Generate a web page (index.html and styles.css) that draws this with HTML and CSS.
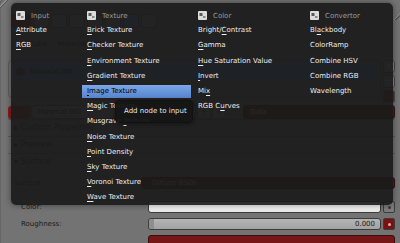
FILE: index.html
```html
<!DOCTYPE html>
<html lang="en">

<head>
    <meta charset="UTF-8">
    <title>Add Node Menu</title>
    <link rel="stylesheet" href="styles.css">
</head>

<body>
    <div class="screen">
        <!-- properties editor underneath the popup -->
        <div class="props">
            <div class="row toolbar">
                <div class="tb-btn red"></div>
                <div class="tb-btn"></div>
                <div class="tb-btn"></div>
                <div class="tb-btn"></div>
                <div class="tb-btn"></div>
                <div class="tb-btn"></div>
                <div class="tb-btn blue"></div>
                <div class="tb-btn"></div>
            </div>
            <div class="row crumbs">
                <span class="crumb-icon"></span><span>Cube</span><span class="crumb-sep">›</span><span>Material.001</span>
            </div>
            <div class="row list-row">
                <div class="list-box">
                    <div class="list-item active"><span class="ball"></span>Material.001</div>
                </div>
                <div class="list-side">
                    <div class="side-btn">+</div>
                    <div class="side-btn">−</div>
                    <div class="side-btn red"></div>
                </div>
            </div>
            <div class="row datablock">
                <div class="db-ball"></div>
                <div class="db-name">Material.001</div>
                <div class="db-btn">F</div>
                <div class="db-btn">+</div>
                <div class="db-btn">×</div>
                <div class="db-data">Data</div>
            </div>
            <div class="panel-head">▸ Custom Properties</div>
            <div class="panel-head">▸ Preview</div>
            <div class="panel-head">▾ Surface</div>
            <div class="row prop surface">
                <div class="prop-label">Surface:</div>
                <div class="field red-field">Diffuse BSDF</div>
            </div>
            <div class="row prop">
                <div class="prop-label">Color:</div>
                <div class="field color-field"></div>
                <div class="mini-btn"></div>
            </div>
            <div class="row prop">
                <div class="prop-label">Roughness:</div>
                <div class="field slider-field"><span class="slider-cap"></span><span>0.000</span></div>
                <div class="mini-btn red"></div>
            </div>
            <div class="row prop">
                <div class="prop-label"></div>
                <div class="field red-field full"></div>
            </div>
        </div>

        <div class="hatch hatch-tl"></div>
        <div class="hatch hatch-tr"></div>

        <!-- add node popup -->
        <div class="menu">
            <div class="menu-col">
                <div class="menu-head"><svg class="node-icon" width="9" height="9" viewBox="0 0 9 9"><rect width="9" height="9" rx="1" fill="#dcdcdc"/><rect x="1.5" y="2" width="3" height="3" fill="#5a5a5a"/><rect x="5" y="5" width="2.5" height="2" fill="#8a8a8a"/></svg>Input</div>
                <div class="menu-item"><u>A</u>ttribute</div>
                <div class="menu-item"><u>R</u>GB</div>
            </div>
            <div class="menu-col">
                <div class="menu-head"><svg class="node-icon" width="9" height="9" viewBox="0 0 9 9"><rect width="9" height="9" rx="1" fill="#dcdcdc"/><rect x="1.5" y="2" width="3" height="3" fill="#5a5a5a"/><rect x="5" y="5" width="2.5" height="2" fill="#8a8a8a"/></svg>Texture</div>
                <div class="menu-item"><u>B</u>rick Texture</div>
                <div class="menu-item"><u>C</u>hecker Texture</div>
                <div class="menu-item"><u>E</u>nvironment Texture</div>
                <div class="menu-item"><u>G</u>radient Texture</div>
                <div class="menu-item active"><u>I</u>mage Texture</div>
                <div class="menu-item"><u>M</u>agic Texture</div>
                <div class="menu-item">Musgrave <u>T</u>exture</div>
                <div class="menu-item"><u>N</u>oise Texture</div>
                <div class="menu-item"><u>P</u>oint Density</div>
                <div class="menu-item"><u>S</u>ky Texture</div>
                <div class="menu-item"><u>V</u>oronoi Texture</div>
                <div class="menu-item"><u>W</u>ave Texture</div>
            </div>
            <div class="menu-col">
                <div class="menu-head"><svg class="node-icon" width="9" height="9" viewBox="0 0 9 9"><rect width="9" height="9" rx="1" fill="#dcdcdc"/><rect x="1.5" y="2" width="3" height="3" fill="#5a5a5a"/><rect x="5" y="5" width="2.5" height="2" fill="#8a8a8a"/></svg>Color</div>
                <div class="menu-item">Bright/<u>C</u>ontrast</div>
                <div class="menu-item"><u>G</u>amma</div>
                <div class="menu-item"><u>H</u>ue Saturation Value</div>
                <div class="menu-item"><u>I</u>nvert</div>
                <div class="menu-item">Mi<u>x</u></div>
                <div class="menu-item">RGB C<u>u</u>rves</div>
            </div>
            <div class="menu-col">
                <div class="menu-head"><svg class="node-icon" width="9" height="9" viewBox="0 0 9 9"><rect width="9" height="9" rx="1" fill="#dcdcdc"/><rect x="1.5" y="2" width="3" height="3" fill="#5a5a5a"/><rect x="5" y="5" width="2.5" height="2" fill="#8a8a8a"/></svg>Convertor</div>
                <div class="menu-item">Bl<u>a</u>ckbody</div>
                <div class="menu-item">ColorRamp</div>
                <div class="menu-item">Combine HSV</div>
                <div class="menu-item">Combine RGB</div>
                <div class="menu-item">Wavelength</div>
            </div>
        </div>

        <div class="tooltip">Add node to input</div>
    </div>
</body>

</html>
```

FILE: styles.css
```css
body {
    margin: 0;
    background-color: #737373;
}

.screen {
    position: relative;
    width: 400px;
    height: 243px;
    overflow: hidden;
    background-color: #737373;
    font-family: "DejaVu Sans", sans-serif;
    font-size: 7px;
    color: #111;
}

/* properties editor */
.props {
    display: flex;
    flex-direction: column;
    padding: 14px 5px 0 7px;
    border-left: 1px solid #666;
}

.row {
    display: flex;
    align-items: center;
}

.toolbar {
    height: 14px;
    gap: 2px;
    padding-left: 3px;
}

.tb-btn {
    width: 14px;
    height: 12px;
    background-color: #8a8a8a;
    border: 1px solid #4a4a4a;
    border-radius: 3px;
}

.tb-btn.red {
    width: 18px;
    background-color: #8a1c1c;
}

.tb-btn.blue {
    background-color: #5680c2;
}

.crumbs {
    height: 15px;
    margin-top: 8px;
    gap: 4px;
    padding-left: 8px;
}

.crumb-icon {
    width: 9px;
    height: 9px;
    border-radius: 2px;
    background-color: #b0702a;
}

.crumb-sep {
    color: #333;
}

.list-row {
    height: 40px;
    margin-top: 9px;
    align-items: flex-start;
}

.list-box {
    flex: 1;
    height: 38px;
    border: 1px solid #5c5c5c;
    border-radius: 4px;
    padding: 2px 4px;
    box-sizing: border-box;
}

.list-item {
    display: flex;
    align-items: center;
    gap: 5px;
    height: 17px;
    padding-left: 3px;
    border-radius: 2px;
}

.list-item.active {
    background-color: #52729f;
}

.ball {
    width: 9px;
    height: 9px;
    border-radius: 50%;
    background-color: #444;
}

.list-side {
    display: flex;
    flex-direction: column;
    gap: 2px;
    width: 12px;
    margin-left: 2px;
}

.side-btn {
    height: 11px;
    background-color: #8a8a8a;
    border: 1px solid #4a4a4a;
    border-radius: 3px;
    text-align: center;
    line-height: 11px;
    color: #ddd;
}

.side-btn.red {
    background-color: #8a1c1c;
}

.datablock {
    height: 14px;
    margin-top: 5px;
    gap: 1px;
}

.db-ball {
    width: 22px;
    height: 13px;
    border-radius: 3px;
    background-color: #8a1c1c;
}

.db-name {
    width: 142px;
    height: 12px;
    padding-left: 6px;
    line-height: 12px;
    background-color: #8c8c8c;
    border: 1px solid #4a4a4a;
    border-radius: 3px;
}

.db-btn {
    width: 12px;
    height: 12px;
    line-height: 12px;
    text-align: center;
    background-color: #8a8a8a;
    border: 1px solid #4a4a4a;
}

.db-data {
    flex: 1;
    height: 12px;
    margin-left: 16px;
    padding-left: 6px;
    line-height: 12px;
    background-color: #5e1a1a;
    border: 1px solid #3a1010;
    border-radius: 3px;
    color: #ccc;
}

.panel-head {
    height: 16px;
    line-height: 16px;
    padding-left: 6px;
    border-top: 1px solid #5d5d5d;
    font-size: 8px;
    color: #222;
}

.panel-head:first-of-type {
    margin-top: 4px;
}

.prop {
    height: 12px;
    margin-top: 5px;
}

.prop.surface {
    height: 13px;
    margin-top: 6px;
    margin-bottom: 7px;
}

.prop-label {
    width: 127px;
    padding-left: 13px;
    color: #1a1a1a;
    flex-shrink: 0;
}

.surface .prop-label {
    padding-left: 6px;
}

.field {
    flex: 1;
    height: 12px;
    box-sizing: border-box;
    border: 1px solid #3c3c3c;
    border-radius: 3px;
}

.color-field {
    background: linear-gradient(#ffffff, #e8e8e8);
}

.slider-field {
    display: flex;
    align-items: center;
    justify-content: space-between;
    padding-right: 5px;
    background: linear-gradient(#b4b4b4, #a2a2a2);
    color: #1a1a1a;
}

.slider-cap {
    width: 5px;
    height: 10px;
    border-radius: 3px 0 0 3px;
    background-color: #8e8e8e;
}

.red-field {
    background-color: #761616;
    border-color: #3a0c0c;
    padding-left: 10px;
    line-height: 11px;
    color: #c8a0a0;
}

.surface .red-field {
    background-color: #5a1e1e;
}

.mini-btn {
    width: 12px;
    height: 12px;
    margin-left: 2px;
    box-sizing: border-box;
    border: 1px solid #3c3c3c;
    border-radius: 2px;
    background-color: #7c7c7c;
    display: flex;
    justify-content: center;
    align-items: center;
}

.mini-btn::after {
    content: "";
    width: 3px;
    height: 3px;
    border-radius: 50%;
    background-color: #3a3a3a;
}

.mini-btn.red {
    background-color: #7a1212;
}

.mini-btn.red::after {
    background-color: #d0b0b0;
}

/* area corner widgets */
.hatch {
    position: absolute;
    background: repeating-linear-gradient(135deg, #8c8c8c 0 1px, #555 1px 2px, transparent 2px 4px);
}

.hatch-tl {
    left: 0;
    top: 0;
    width: 10px;
    height: 10px;
    clip-path: polygon(0 0, 100% 0, 0 100%);
}

.hatch-tr {
    right: 0;
    top: 10px;
    width: 8px;
    height: 10px;
    clip-path: polygon(100% 0, 100% 100%, 0 100%);
}

/* popup menu */
.menu {
    position: absolute;
    left: 11px;
    top: 3px;
    width: 382px;
    height: 202px;
    box-sizing: border-box;
    padding: 5px 0 0;
    display: grid;
    grid-template-columns: 71px 111px 112px 88px;
    background-color: rgba(26, 26, 26, 0.92);
    border-radius: 5px;
    box-shadow: 0 0 6px rgba(0, 0, 0, 0.45);
}

.menu-col {
    display: flex;
    flex-direction: column;
}

.menu-head {
    display: flex;
    align-items: center;
    height: 15.2px;
    padding-left: 5px;
    color: #9a9a9a;
}

.node-icon {
    margin-right: 6px;
}

.menu-item {
    height: 15.2px;
    line-height: 15.2px;
    padding-left: 5px;
    color: #ededed;
    white-space: nowrap;
}

.menu-item u {
    text-decoration-thickness: 1px;
    text-underline-offset: 2px;
}

.menu-item.active {
    height: 13.2px;
    line-height: 13.2px;
    margin: 1px 2px 1px 0;
    background: linear-gradient(#7ba6e8, #5683cc);
    color: #000;
}

.tooltip {
    position: absolute;
    left: 115px;
    top: 100px;
    width: 78px;
    height: 23px;
    box-sizing: border-box;
    padding-left: 8px;
    line-height: 21px;
    background-color: rgba(22, 22, 22, 0.96);
    border: 1px solid #111;
    border-radius: 4px;
    color: #e6e6e6;
    box-shadow: 0 1px 4px rgba(0, 0, 0, 0.4);
}
```
